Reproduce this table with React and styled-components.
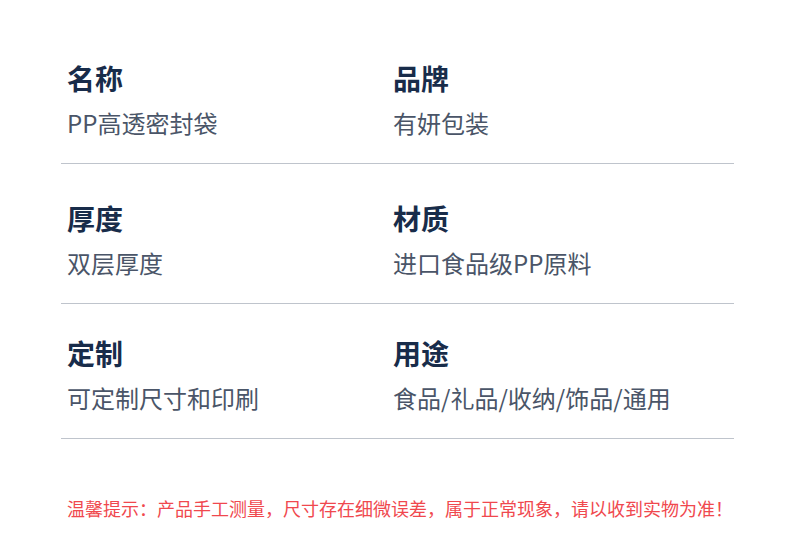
import React from "react";
import styled, { createGlobalStyle } from "styled-components";

const Global = createGlobalStyle`
  html, body { margin: 0; padding: 0; background: #ffffff; }
  body { font-family: "Noto Sans CJK SC", "Noto Sans", sans-serif; }
`;

const Page = styled.div`
  width: 790px;
  height: 558px;
  background: #ffffff;
  padding-left: 61px;
  box-sizing: border-box;
`;

const Table = styled.div`
  width: 673px;
  display: flex;
  flex-direction: column;
`;

const Row = styled.div`
  display: grid;
  grid-template-columns: 326px 1fr;
  padding-top: ${(p) => p.$top}px;
  padding-bottom: 28px;
  border-bottom: 1px solid #bfc4cc;
`;

const Cell = styled.div`
  padding-left: 6px;
  display: flex;
  flex-direction: column;
  gap: 19px;
`;

const Label = styled.div`
  font-size: 28px;
  line-height: 28px;
  font-weight: 700;
  color: #182c4a;
  white-space: nowrap;
`;

const Value = styled.div`
  font-size: 24px;
  line-height: 24px;
  color: #4a5568;
  white-space: nowrap;
`;

const Note = styled.div`
  margin-top: 60px;
  padding-left: 6px;
  font-size: 18px;
  line-height: 18px;
  color: #f0484e;
  white-space: nowrap;
  letter-spacing: 0;
`;

const rows = [
  { top: 64, items: [["名称", "PP高透密封袋"], ["品牌", "有妍包装"]] },
  { top: 40, items: [["厚度", "双层厚度"], ["材质", "进口食品级PP原料"]] },
  { top: 35, items: [["定制", "可定制尺寸和印刷"], ["用途", "食品/礼品/收纳/饰品/通用"]] },
];

export default function App() {
  return (
    <>
      <Global />
      <Page>
        <Table>
          {rows.map((r, i) => (
            <Row key={i} $top={r.top}>
              {r.items.map(([l, v]) => (
                <Cell key={l}>
                  <Label>{l}</Label>
                  <Value>{v}</Value>
                </Cell>
              ))}
            </Row>
          ))}
        </Table>
        <Note>温馨提示：产品手工测量，尺寸存在细微误差，属于正常现象，请以收到实物为准！</Note>
      </Page>
    </>
  );
}
